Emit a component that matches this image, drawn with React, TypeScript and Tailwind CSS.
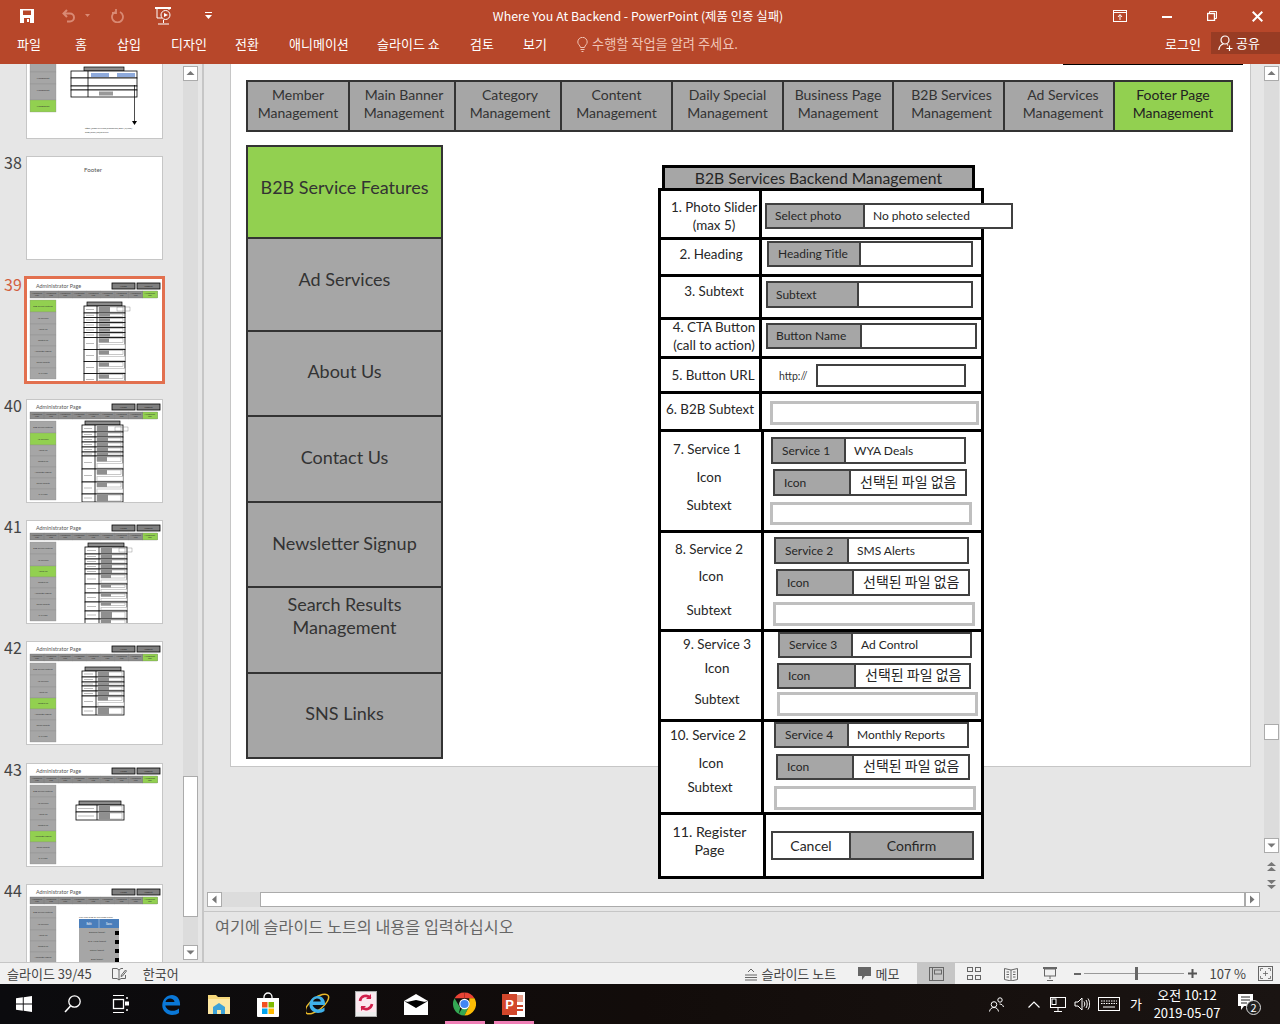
import React from "react";

const GRAY = "#a6a6a6";
const SIDE = ["B2B Service Features", "Ad Services", "About Us", "Contact Us", "Newsletter Signup", "Search Results Management", "SNS Links"];

// --- thumbnails: tiny slide drawings ---
function MiniForm({ x, w, div, y, rows }: { x: number; w: number; div: number; y: number; rows: number[] }) {
  let cy = y + 4;
  return (
    <g>
      <rect x={x + 3} y={y} width={w - 6} height={4} fill="#8c8c8c" stroke="#000" strokeWidth={0.7} />
      {rows.map((h, i) => {
        const top = cy;
        cy += h;
        return (
          <g key={i}>
            <rect x={x} y={top} width={w} height={h} fill="#fff" stroke="#000" strokeWidth={0.8} />
            <line x1={div} x2={div} y1={top} y2={top + h} stroke="#000" strokeWidth={0.8} />
            <rect x={x + 2} y={top + h / 2 - 0.4} width={div - x - 5} height={0.8} fill="#aaa" />
            {h < 9 ? (
              <g>
                <rect x={div + 2} y={top + 1} width={x + w - div - 4} height={h - 2} fill="#fff" stroke="#777" strokeWidth={0.4} />
                <rect x={div + 2} y={top + 1} width={11} height={h - 2} fill="#8f8f8f" />
              </g>
            ) : (
              <g>
                <rect x={div + 2} y={top + 1} width={x + w - div - 4} height={h / 2 - 2} fill="#fff" stroke="#777" strokeWidth={0.4} />
                <rect x={div + 2} y={top + 1} width={10} height={h / 2 - 2} fill="#8f8f8f" />
                <rect x={div + 2} y={top + h / 2 + 1} width={x + w - div - 2} height={h / 2 - 2} fill="#fff" stroke="#bbb" strokeWidth={0.7} />
              </g>
            )}
          </g>
        );
      })}
    </g>
  );
}

function SideCol({ active }: { active: number }) {
  const tops = [21, 33, 45, 56, 67, 78, 89, 100];
  return (
    <g>
      <text x={9} y={9} fontSize={5.4} fill="#555">Administrator Page</text>
      <rect x={85} y={4} width={23} height={6} fill="#7f7f7f" stroke="#000" strokeWidth={0.8} />
      <rect x={110} y={4} width={23} height={6} fill="#7f7f7f" stroke="#000" strokeWidth={0.8} />
      <text x={96.5} y={8.2} fontSize={2.6} textAnchor="middle" fill="#222">Home</text>
      <text x={121.5} y={8.2} fontSize={2.6} textAnchor="middle" fill="#222">Logout</text>
      {[0, 1, 2, 3, 4, 5, 6, 7, 8].map((i) => (
        <g key={i}>
          <rect x={3 + i * 14.1} y={12} width={i === 8 ? 15 : 14.1} height={7} fill={i === 8 ? "#92d050" : "#8c8c8c"} stroke="#666" strokeWidth={0.3} />
          <text x={10 + i * 14.1} y={15} fontSize={1.8} textAnchor="middle" fill="#333">Management</text>
          <text x={10 + i * 14.1} y={17.4} fontSize={1.8} textAnchor="middle" fill="#333">Page</text>
        </g>
      ))}
      {SIDE.map((s, i) => (
        <g key={s}>
          <rect x={3} y={tops[i]} width={26} height={tops[i + 1] - tops[i]} fill={i === active ? "#92d050" : GRAY} stroke="#888" strokeWidth={0.3} />
          {!(active === 5 && i >= 5) && (
            <text x={16} y={(tops[i] + tops[i + 1]) / 2 + 0.8} fontSize={2.1} textAnchor="middle" fill="#333">{s.length > 20 ? "Search Results" : s}</text>
          )}
        </g>
      ))}
    </g>
  );
}

function Thumb37() {
  return (
    <g>
      {[0, 12, 24, 36, 48, 64].map((t, i) => (
        <g key={t}>
          <rect x={3} y={t} width={26} height={i === 4 ? 16 : 12} fill={i === 5 ? "#92d050" : GRAY} stroke="#888" strokeWidth={0.3} />
          {t >= 36 && <text x={16} y={t + 7} fontSize={2.2} textAnchor="middle" fill="#333">Management</text>}
        </g>
      ))}
      <rect x={57} y={31} width={40} height={4} fill="#8c8c8c" stroke="#000" strokeWidth={0.7} />
      {[[35, 7], [42, 8], [50, 4], [54, 7]].map(([t, h]) => (
        <g key={t}>
          <rect x={44} y={t} width={66} height={h} fill="#fff" stroke="#000" strokeWidth={0.8} />
          <line x1={61} x2={61} y1={t} y2={t + h} stroke="#000" strokeWidth={0.8} />
        </g>
      ))}
      <rect x={64} y={37} width={18} height={4} fill="#8eaadb" />
      <rect x={90} y={37} width={18} height={4} fill="#8eaadb" />
      <rect x={72} y={55.5} width={14} height={4} fill="#999" />
      <line x1={107.5} x2={107.5} y1={49} y2={86} stroke="#000" strokeWidth={0.7} />
      <polygon points="105,85 110,85 107.5,89" fill="#000" />
      <text x={58} y={93} fontSize={2.3} fill="#444">https://page.wya.com/dashboard/8391/#/add/</text>
      <text x={58} y={97} fontSize={2.3} fill="#444">page/main/list/preview</text>
    </g>
  );
}

function Thumb44() {
  return (
    <g>
      <text x={52} y={33} fontSize={2.4} fill="#444">Pick and drag to rearrange order</text>
      <rect x={52} y={34} width={40} height={9} fill="#4a7ebb" />
      <line x1={72} x2={72} y1={34} y2={43} stroke="#fff" strokeWidth={0.4} />
      <text x={62} y={40} fontSize={3} fill="#fff" textAnchor="middle">Edit</text>
      <text x={82} y={40} fontSize={3} fill="#fff" textAnchor="middle">Save</text>
      {[43, 52, 61, 70].map((t, i) => (
        <g key={t}>
          <rect x={52} y={t} width={40} height={9} fill={GRAY} />
          <text x={70} y={t + 5} fontSize={2.2} fill="#333" textAnchor="middle">{["Business (Result)", "SMS Alerts (Result)", "Others (Result)", "Blog (Result)"][i]}</text>
          <rect x={88} y={t + 3} width={4} height={4} fill="#000" />
        </g>
      ))}
    </g>
  );
}

function Thumb({ n, active, children, selected, top }: { n: number; active?: number; children?: React.ReactNode; selected?: boolean; top?: boolean }) {
  return (
    <div className="flex h-[102px] shrink-0">
      <div className={`w-[27px] pl-[4px] -mt-[2px] text-[16px] leading-[14px] ${selected ? "text-[#d2603f]" : "text-[#444]"}`}>{top ? "" : n}</div>
      <div className={`relative w-[135px] h-[102px] shrink-0 bg-white outline outline-1 outline-[#c6c6c6] ${selected ? "outline-3 outline-[#e2704f] -outline-offset-0" : ""}`}>
        <svg viewBox="0 0 135 102" className="w-[135px] h-[102px] block overflow-hidden font-['Lato',sans-serif]">
          {active !== undefined && <SideCol active={active} />}
          {children}
        </svg>
      </div>
    </div>
  );
}

function ScrollBtn({ dir, className = "" }: { dir: "up" | "down" | "left" | "right"; className?: string }) {
  const pts = { up: "3.5,9 11.5,9 7.5,5", down: "3.5,5.5 11.5,5.5 7.5,9.5", left: "9.5,3.5 9.5,11.5 5,7.5", right: "5,3.5 5,11.5 9.5,7.5" }[dir];
  return (
    <div className={`w-[15px] h-[15px] bg-white border border-[#ababab] flex items-center justify-center shrink-0 ${className}`}>
      <svg width="13" height="13" viewBox="1 1 13 13"><polygon points={pts} fill="#777" /></svg>
    </div>
  );
}

function ThumbPane() {
  return (
    <div className="relative w-[204px] shrink-0 bg-[#e6e6e6] border-r-2 border-[#c6c6c6] flex overflow-hidden">
      <div className="w-[183px] shrink-0 flex flex-col gap-[19.25px] -mt-[28px]">
        <Thumb n={37} top><Thumb37 /></Thumb>
        <Thumb n={38}><text x={66} y={15} fontSize={6.2} textAnchor="middle" fill="#555">Footer</text></Thumb>
        <Thumb n={39} active={0} selected><MiniForm x={57} w={41} div={70} y={23} rows={[7, 4.5, 5, 5, 5, 5, 12, 12, 12, 12]} />
          <rect x={90} y={28} width={13} height={4} fill="none" stroke="#555" strokeWidth={0.3} /></Thumb>
        <Thumb n={40} active={1}><MiniForm x={55} w={41} div={68} y={21} rows={[7, 5, 5, 5, 5, 4, 13, 13, 12, 8]} />
          <rect x={88} y={27} width={13} height={4} fill="none" stroke="#555" strokeWidth={0.3} /></Thumb>
        <Thumb n={41} active={2}><MiniForm x={58} w={42} div={72} y={22} rows={[7, 5, 5, 5, 5, 10, 9, 9, 9, 8, 12]} />
          <rect x={92} y={27} width={13} height={4} fill="none" stroke="#555" strokeWidth={0.3} /></Thumb>
        <Thumb n={42} active={3}><MiniForm x={55} w={42} div={69} y={25} rows={[6, 5, 4, 5, 5, 11, 8]} /></Thumb>
        <Thumb n={43} active={4}><MiniForm x={49} w={48} div={70} y={37} rows={[7, 8]} /></Thumb>
        <Thumb n={44} active={5}><Thumb44 /></Thumb>
      </div>
      <div className="w-[15px] shrink-0 bg-[#dcdcdc] mt-[2px] mb-[2px] flex flex-col">
        <ScrollBtn dir="up" />
        <div className="mt-[695px] h-[141px] bg-white border border-[#ababab]" />
        <ScrollBtn dir="down" className="mt-auto" />
      </div>
    </div>
  );
}

// --- top bar ---
function QuickAccess() {
  return (
    <div className="flex items-center h-[32px] pl-[20px]">
      <svg width="14" height="14" viewBox="0 0 14 14"><path fill="#fff" fillRule="evenodd" d="M0 0h14v14H0zM3 1.5V6h8V1.5zM4 9v5h6V9zm3 1h2v3H7z" /></svg>
      <svg className="ml-[28px]" width="14" height="14" viewBox="0 0 14 14" fill="none" stroke="#d98a74" strokeWidth="2"><path d="M5 1 1.5 4.5 5 8" /><path d="M2 4.5h6a4 4 0 0 1 0 8H5" /></svg>
      <svg className="ml-[9px]" width="5" height="4" viewBox="0 0 5 4"><path d="M0 0h5L2.5 3z" fill="#d98a74" /></svg>
      <svg className="ml-[21px]" width="14" height="14" viewBox="0 0 14 14" fill="none" stroke="#d98a74" strokeWidth="1.8"><path d="M4 3a5.5 5.5 0 1 0 5 0" /><path d="M4 0v4H0" transform="translate(1 0)" /></svg>
      <svg className="ml-[30px]" width="17" height="18" viewBox="0 0 17 18" fill="none" stroke="#fff" strokeWidth="1"><path d="M0 1h16" strokeWidth="2" /><path d="M2 2v9h5M14 2v1" /><circle cx="10.5" cy="8" r="4.5" /><polygon points="9,6 13,8 9,10" fill="#fff" stroke="none" /><path d="M8.5 13v3M3 17h11" /></svg>
      <svg className="ml-[33px]" width="7" height="8" viewBox="0 0 7 8" fill="#fff"><path d="M0 0h7v1H0zM0 3h7L3.5 7z" /></svg>
    </div>
  );
}

function WindowButtons() {
  return (
    <div className="flex items-center justify-end h-[32px] pr-[17px]">
      <svg width="14" height="12" viewBox="0 0 14 12" fill="none" stroke="#fff"><rect x=".5" y=".5" width="13" height="11" /><path d="M1 2.5h12" /><path d="M7 10V5M5 7l2-2.5L9 7" /></svg>
      <div className="w-[10px] h-[2px] bg-white ml-[35px] mt-[2px]" />
      <svg className="ml-[35px]" width="10" height="10" viewBox="0 0 10 10" fill="none" stroke="#fff"><rect x=".5" y="2.5" width="7" height="7" strokeWidth="1.4" /><path d="M2.5 2V.5h7v7H8" /></svg>
      <svg className="ml-[35px]" width="11" height="11" viewBox="0 0 11 11" stroke="#fff" strokeWidth="2"><path d="M.7.7l9.6 9.6M10.3.7.7 10.3" /></svg>
    </div>
  );
}

function TopBar() {
  return (
    <header className="h-[64px] shrink-0 bg-[#b7472a] text-white">
      <div className="grid grid-cols-[1fr_auto_1fr]">
        <QuickAccess />
        <div className="text-[12.4px] leading-[32px] pr-[4px]">Where You At Backend - PowerPoint (제품 인증 실패)</div>
        <WindowButtons />
      </div>
      <div className="flex items-center h-[24px]">
        <div className="pl-[17px] grid grid-cols-[58px_42px_54px_64px_54px_88px_93px_53px_54px] text-[13px] w-[577px]">
          {["파일", "홈", "삽입", "디자인", "전환", "애니메이션", "슬라이드 쇼", "검토", "보기"].map((t) => <span key={t} className="whitespace-nowrap">{t}</span>)}
        </div>
        <svg width="11" height="15" viewBox="0 0 11 15" fill="none" stroke="#f0c4b6"><path d="M3.5 10.5C3 8 .8 7.5.8 5a4.7 4.7 0 0 1 9.4 0c0 2.500-2.200 3-2.700 5.500z" /><path d="M3.500 12.500h4M4.500 14.500h2" /></svg>
        <span className="ml-[4px] text-[13.2px] text-[#f0c4b6]">수행할 작업을 알려 주세요.</span>
        <span className="ml-auto text-[13px]">로그인</span>
        <div className="ml-[10px] w-[69px] h-[22px] mt-[-2px] bg-[#983c24] flex items-center pl-[7px] text-[13px]">
          <svg width="15" height="16" viewBox="0 0 15 16" fill="none" stroke="#fff" strokeWidth="1.200"><circle cx="7" cy="5" r="4" /><path d="M.8 15c.4-3.500 2.500-5.500 4.500-6M9 9.500l1 .7" /><path d="M8.500 13.500h6M11.500 10.500v6" /></svg>
          <span className="ml-[3px]">공유</span>
        </div>
      </div>
    </header>
  );
}

// --- the slide ---
const NAV = [
  { t: "Member", pad: "" },
  { t: "Main Banner", pad: "pl-[4px]" },
  { t: "Category", pad: "pl-[4px]" },
  { t: "Content", pad: "" },
  { t: "Daily Special", pad: "" },
  { t: "Business Page", pad: "" },
  { t: "B2B Services", pad: "pl-[6px]" },
  { t: "Ad Services", pad: "pl-[8px]" },
  { t: "Footer Page", pad: "bg-[#92d050] text-[#222]" },
];

function SlideNav() {
  return (
    <div className="ml-[15px] mt-[15px] w-[987px] h-[52px] border-2 border-[#333] grid grid-cols-[102px_106px_106px_111px_111px_110px_111px_110px_116px] bg-[#a6a6a6] text-[14px] leading-[18px] text-[#333]">
      {NAV.map(({ t, pad }) => (
        <div key={t} className={`flex flex-col items-center justify-center pb-[4px] border-r-2 border-[#333] last:border-r-0 ${pad}`}>
          <span>{t}</span><span>Management</span>
        </div>
      ))}
    </div>
  );
}

function SlideSide() {
  return (
    <div className="w-[197px] h-[614px] shrink-0 border-2 border-[#333] grid grid-rows-[92px_93px_85px_86px_85px_86px_83px] text-[18px] leading-[23px] text-[#333] text-center bg-[#a6a6a6]">
      <div className="bg-[#92d050] flex items-center justify-center pb-[9px] border-b-2 border-[#333]">B2B Service Features</div>
      <div className="flex items-center justify-center pb-[10px] border-b-2 border-[#333]">Ad Services</div>
      <div className="flex items-center justify-center pb-[4px] border-b-2 border-[#333]">About Us</div>
      <div className="flex items-center justify-center pb-[4px] border-b-2 border-[#333]">Contact Us</div>
      <div className="flex items-center justify-center pb-[2px] border-b-2 border-[#333]">Newsletter Signup</div>
      <div className="flex items-center justify-center pb-[28px] border-b-2 border-[#333]">Search Results<br />Management</div>
      <div className="flex items-center justify-center pb-[4px]">SNS Links</div>
    </div>
  );
}

function Field({ label, value, className, labelW, pad = "pl-[9px]", ko }: { label: string; value?: string; className: string; labelW: string; pad?: string; ko?: boolean }) {
  return (
    <div className={`relative z-10 flex border-2 border-[#404040] bg-white text-[12px] text-[#262626] ${className}`}>
      <div className={`bg-[#a6a6a6] border-r-2 border-[#404040] flex items-center shrink-0 ${pad} ${labelW}`}>{label}</div>
      {value && <div className={`flex items-center ${ko ? "pl-[9px] pb-[4px] text-[14px] font-['Noto_Sans_CJK_KR',sans-serif]" : "pl-[8px]"}`}>{value}</div>}
    </div>
  );
}

function Blank({ className }: { className: string }) {
  return <div className={`border-[3px] border-[#bfbfbf] bg-white ${className}`} />;
}

const FILE_NONE = "선택된 파일 없음";

function Row({ h, labelW, children, label, last }: { h: string; labelW: string; label: React.ReactNode; children: React.ReactNode; last?: boolean }) {
  return (
    <div className={`flex ${h} ${last ? "" : "border-b-[3px] border-black"}`}>
      <div className={`shrink-0 border-r-[3px] border-black text-center ${labelW}`}>{label}</div>
      <div className="flex-1 min-w-0">{children}</div>
    </div>
  );
}

function BackendForm() {
  return (
    <div className="ml-[215px] mt-[20px] w-[326px] shrink-0 text-[13.4px] leading-[18px] text-[#262626]">
      <div className="ml-[4px] w-[313px] h-[23px] border-[3px] border-b-0 border-black bg-[#a6a6a6] text-center text-[15.7px] leading-[20px]">B2B Services Backend Management</div>
      <div className="border-[3px] border-black bg-white">
        <Row h="h-[49px]" labelW="w-[101px]" label={<div className="pl-[8px] pt-[7px]">1. Photo Slider<br />(max 5)</div>}>
          <Field label="Select photo" value="No photo selected" pad="pl-[8px]" className="ml-[3px] mt-[12px] w-[248px] h-[26px]" labelW="w-[98px]" />
        </Row>
        <Row h="h-[37px]" labelW="w-[101px]" label={<div className="pt-[5px] pl-[2px]">2. Heading</div>}>
          <Field label="Heading Title" className="ml-[5px] mt-[1px] w-[206px] h-[26px]" labelW="w-[92px]" />
        </Row>
        <Row h="h-[43px]" labelW="w-[101px]" label={<div className="pt-[5px] pl-[8px]">3. Subtext</div>}>
          <Field label="Subtext" pad="pl-[8px]" className="ml-[4px] mt-[4px] w-[207px] h-[27px]" labelW="w-[91px]" />
        </Row>
        <Row h="h-[39px]" labelW="w-[101px]" label={<div className="-mt-[2px] pl-[8px] whitespace-nowrap">4. CTA Button<br />(call to action)</div>}>
          <Field label="Button Name" pad="pl-[8px]" className="ml-[4px] mt-[3px] w-[211px] h-[26px]" labelW="w-[94px]" />
        </Row>
        <Row h="h-[35px]" labelW="w-[101px]" label={<div className="pt-[7px] pl-[6px]">5. Button URL</div>}>
          <div className="flex items-center ml-[17px] mt-[5px]">
            <span className="w-[37px] text-[10.5px] text-[#333]">http://</span>
            <div className="w-[150px] h-[23px] border-2 border-[#404040] bg-white" />
          </div>
        </Row>
        <Row h="h-[38px]" labelW="w-[101px]" label={<div className="pt-[6px]">6. B2B Subtext</div>}>
          <Blank className="ml-[8px] mt-[7px] w-[209px] h-[24px]" />
        </Row>
        <Row h="h-[101px]" labelW="w-[103px]" label={
          <div className="pr-[4px]">
            <p className="mt-[8px] pr-[4px]">7. Service 1</p>
            <p className="mt-[10px]">Icon</p>
            <p className="mt-[10px]">Subtext</p>
          </div>
        }>
          <Field label="Service 1" value="WYA Deals" className="ml-[7px] mt-[5px] w-[195px] h-[27px]" labelW="w-[73px]" />
          <Field label="Icon" value={FILE_NONE} ko className="ml-[9px] mt-[5px] w-[194px] h-[27px]" labelW="w-[76px]" />
          <Blank className="ml-[6px] mt-[6px] w-[202px] h-[23px]" />
        </Row>
        <Row h="h-[99px]" labelW="w-[103px]" label={
          <div className="pr-[4px]">
            <p className="mt-[7px]">8. Service 2</p>
            <p className="mt-[9px] pl-[4px]">Icon</p>
            <p className="mt-[16px]">Subtext</p>
          </div>
        }>
          <Field label="Service 2" value="SMS Alerts" className="ml-[10px] mt-[4px] w-[195px] h-[27px]" labelW="w-[73px]" />
          <Field label="Icon" value={FILE_NONE} ko className="ml-[12px] mt-[5px] w-[194px] h-[27px]" labelW="w-[76px]" />
          <Blank className="ml-[9px] mt-[6px] w-[202px] h-[24px]" />
        </Row>
        <Row h="h-[90px]" labelW="w-[103px]" label={
          <div className="pl-[12px]">
            <p className="mt-[3px]">9. Service 3</p>
            <p className="mt-[6px]">Icon</p>
            <p className="mt-[13px]">Subtext</p>
          </div>
        }>
          <Field label="Service 3" value="Ad Control" className="ml-[14px] w-[194px] h-[26px]" labelW="w-[73px]" />
          <Field label="Icon" value={FILE_NONE} ko className="ml-[13px] mt-[5px] w-[194px] h-[26px]" labelW="w-[77px]" />
          <Blank className="ml-[13px] mt-[3px] w-[201px] h-[24px]" />
        </Row>
        <Row h="h-[93px]" labelW="w-[103px]" label={
          <div>
            <p className="mt-[4px] pr-[6px]">10. Service 2</p>
            <p className="mt-[10px]">Icon</p>
            <p className="mt-[6px] pr-[2px]">Subtext</p>
          </div>
        }>
          <Field label="Service 4" value="Monthly Reports" className="ml-[10px] w-[195px] h-[26px]" labelW="w-[73px]" />
          <Field label="Icon" value={FILE_NONE} ko className="ml-[12px] mt-[6px] w-[194px] h-[26px]" labelW="w-[76px]" />
          <Blank className="ml-[10px] mt-[6px] w-[202px] h-[24px]" />
        </Row>
        <Row h="h-[61px]" labelW="w-[105px]" last label={<div className="pt-[8px] pr-[5px] text-[14.2px]">11. Register<br />Page</div>}>
          <div className="ml-[5px] mt-[16px] w-[203px] h-[29px] flex border-2 border-[#404040] text-[14px]">
            <div className="w-[78px] flex items-center justify-center border-r-2 border-[#404040]">Cancel</div>
            <div className="flex-1 flex items-center justify-center bg-[#a6a6a6]">Confirm</div>
          </div>
        </Row>
      </div>
    </div>
  );
}

function Slide() {
  return (
    <div className="ml-[26px] w-[1021px] h-[703px] shrink-0 bg-white border border-t-0 border-[#c6c6c6] font-['Lato','Noto_Sans_CJK_KR',sans-serif]">
      <div className="ml-[832px] w-[180px] h-[1px] bg-black" />
      <SlideNav />
      <div className="flex ml-[15px] mt-[13px]">
        <SlideSide />
        <BackendForm />
      </div>
    </div>
  );
}

function Editor() {
  return (
    <div className="flex-1 min-w-0 flex flex-col">
      <div className="flex-1 min-h-0 flex relative">
        <div className="flex-1 min-w-0"><Slide /></div>
        <div className="w-[17px] shrink-0 flex flex-col pl-[1px] pr-[1px] pt-[2px]">
          <div className="h-[789px] bg-[#dcdcdc] flex flex-col">
            <ScrollBtn dir="up" />
            <div className="mt-[643px] h-[16px] bg-white border border-[#ababab]" />
            <ScrollBtn dir="down" className="mt-auto" />
          </div>
          <div className="mt-[6px] h-[15px] flex items-center justify-center">
            <svg width="11" height="11" viewBox="0 0 11 11" fill="#777"><path d="M1 5h9L5.500 1zM1 10h9L5.500 6z" /></svg>
          </div>
          <div className="mt-[3px] h-[15px] flex items-center justify-center">
            <svg width="11" height="11" viewBox="0 0 11 11" fill="#777"><path d="M1 1h9L5.500 5zM1 6h9L5.500 10z" /></svg>
          </div>
        </div>
      </div>
      <div className="h-[15px] shrink-0 flex ml-[3px] mr-[20px] mb-[4px]">
        <ScrollBtn dir="left" />
        <div className="w-[38px] bg-[#dcdcdc]" />
        <div className="flex-1 bg-white border border-[#ababab]" />
        <ScrollBtn dir="right" />
      </div>
      <div className="h-[51px] shrink-0 border-t border-[#c6c6c6] pl-[11px] pt-[3px] text-[16.25px] leading-[22px] text-[#666]">여기에 슬라이드 노트의 내용을 입력하십시오</div>
    </div>
  );
}

// --- status bar ---
function StatusBar() {
  return (
    <footer className="h-[22px] shrink-0 bg-[#f1f1f1] border-t border-[#c6c6c6] flex items-center text-[13px] text-[#444]">
      <span className="ml-[7px]">슬라이드 39/45</span>
      <svg className="ml-[20px]" width="15" height="14" viewBox="0 0 15 14" fill="none" stroke="#666"><path d="M.5 1.500H5l2 1.500v10l-2-1.500H.5zM7 3l2-1.500h2M7 13l2-1.500h4.500V8" /><path d="M9.500 8l4-5 1 1-4 5-1.500.5z" /></svg>
      <span className="ml-[16px]">한국어</span>
      <svg className="ml-auto" width="12" height="14" viewBox="0 0 12 14" fill="none" stroke="#666"><path d="M0 8h12M0 10.500h12M0 13h12" /><path d="M3 5l3-3 3 3" /></svg>
      <span className="ml-[4px] w-[84px] whitespace-nowrap">슬라이드 노트</span>
      <svg className="ml-[13px]" width="13" height="13" viewBox="0 0 13 13" fill="#666"><path d="M0 0h13v9H7l-3 4V9H0z" /></svg>
      <span className="ml-[4px] w-[24px] whitespace-nowrap">메모</span>
      <div className="ml-[18px] w-[38px] h-[21px] bg-[#c6c6c6] flex items-center justify-center">
        <svg width="15" height="14" viewBox="0 0 15 14" fill="none" stroke="#666"><rect x=".5" y=".5" width="14" height="13" /><path d="M3.500 1v12" /><rect x="5.500" y="3" width="7" height="4" /></svg>
      </div>
      <svg className="ml-[12px]" width="14" height="13" viewBox="0 0 14 13" fill="none" stroke="#666"><rect x=".5" y=".5" width="5" height="4" /><rect x="8.500" y=".5" width="5" height="4" /><rect x=".5" y="8.500" width="5" height="4" /><rect x="8.500" y="8.500" width="5" height="4" /></svg>
      <svg className="ml-[23px]" width="14" height="14" viewBox="0 0 14 14" fill="none" stroke="#666"><path d="M.5 1.500 7 3l6.500-1.500v11L7 14 .5 12.500zM7 3v11M2.500 5h2.500M2.500 7.500h2.500M2.500 10h2.500M9 5h2.500M9 7.500h2.500M9 10h2.500" /></svg>
      <svg className="ml-[25px]" width="14" height="14" viewBox="0 0 14 14" fill="none" stroke="#666"><path d="M0 1h14" strokeWidth="2" /><rect x="1.500" y="2" width="11" height="7" /><path d="M7 9v3M4 13.500h6" /></svg>
      <div className="ml-[17px] w-[7px] h-[2px] bg-[#666]" />
      <div className="relative ml-[3px] w-[100px] h-[1px] bg-[#999]">
        <div className="absolute left-[51px] top-[-6px] w-[3px] h-[13px] bg-[#666]" />
      </div>
      <svg className="ml-[4px]" width="9" height="9" viewBox="0 0 9 9" fill="#555"><path d="M3.500 0h2v3.500H9v2H5.500V9h-2V5.500H0v-2h3.500z" /></svg>
      <span className="ml-[12px]">107 %</span>
      <svg className="ml-[12px] mr-[7px]" width="15" height="15" viewBox="0 0 15 15" fill="none" stroke="#666"><rect x=".5" y=".5" width="14" height="14" /><path d="M2.500 5V2.500H5M10 2.500h2.500V5M12.500 10v2.500H10M5 12.500H2.500V10M7.500 5V10M5 7.500h5" strokeWidth=".8" /></svg>
    </footer>
  );
}

// --- taskbar ---
function AppIcons() {
  return (
    <div className="flex items-center h-[40px]">
      <svg className="ml-[16px]" width="16" height="16" viewBox="0 0 16 16" fill="#fff"><path d="M0 2.300 6.800 1.300v6.200H0zM7.700 1.200 16 0v7.500H7.700zM0 8.400h6.800v6.300L0 13.700zM7.700 8.400H16V16l-8.300-1.200z" /></svg>
      <svg className="ml-[32px]" width="17" height="18" viewBox="0 0 17 18" fill="none" stroke="#fff" strokeWidth="1.300"><circle cx="10.500" cy="6.500" r="5.700" /><path d="M6.500 11 1 17" strokeWidth="1.600" /></svg>
      <svg className="ml-[31px]" width="17" height="18" viewBox="0 0 17 18" fill="none" stroke="#fff"><path d="M1 .5h11M1 17.500h11" /><rect x="1.500" y="4.500" width="10" height="9" strokeWidth="1.300" /><path d="M15 2v2M15 14v2" strokeWidth="1.500" /><rect x="13.500" y="7" width="3" height="3" fill="#fff" /></svg>
      <svg className="ml-[33px]" width="20" height="23" viewBox="0 0 20 23"><path d="M3.300 12.500h14.700c.6-6-3-10.500-8-10.500C5 2 .8 6 .3 11.500-.2 18 5 22 10 22c3 0 5.500-1 7-2v-4.500c-2 1.500-4 2.300-6.500 2.300-3.500 0-6.500-2-7.200-5.300zM3.500 9c.5-2 2-3.500 4.500-3.500 2.300 0 4.500 1.200 4.500 3.500z" fill="#0a78d7" fillRule="evenodd" /></svg>
      <svg className="ml-[26px]" width="22" height="22" viewBox="0 0 22 22"><path d="M0 2h8l2 2h12v16H0z" fill="#f5d77a" /><rect y="6" width="22" height="15" fill="#fde7a3" /><path d="M5 21v-7l6-4 6 4v7h-4v-4H9v4z" fill="#3da2d8" /></svg>
      <svg className="ml-[27px]" width="22" height="25" viewBox="0 0 22 25"><path d="M7 8V5a4 4 0 0 1 8 0v3" fill="none" stroke="#fff" strokeWidth="1.300" /><path d="M0 6h22v18a1 1 0 0 1-1 1H1a1 1 0 0 1-1-1z" fill="#fff" /><rect x="5" y="10" width="5.500" height="5.500" fill="#f25022" /><rect x="11.500" y="10" width="5.500" height="5.500" fill="#7fba00" /><rect x="5" y="16.500" width="5.500" height="5.500" fill="#00a4ef" /><rect x="11.500" y="16.500" width="5.500" height="5.500" fill="#ffb900" /></svg>
      <svg className="ml-[27px]" width="24" height="26" viewBox="0 0 24 26"><ellipse cx="11" cy="13" rx="14" ry="6" transform="rotate(-38 11 13)" fill="none" stroke="#e9b929" strokeWidth="1.500" /><path d="M4.500 14h14.500c.6-5-2.500-9-7-9-4.500 0-8 3.500-8.500 8-.5 5.500 4 9 8.500 9 2.800 0 5-.8 6.500-2v-3.500c-1.700 1.200-3.500 2-5.500 2-3 0-5.500-1.800-6.500-4.500zM7 10.500c.5-1.800 2-3 4-3s3.800 1 3.800 3z" fill="#3fb0e8" fillRule="evenodd" /></svg>
      <div className="ml-[25px] w-[22px] h-[26px] bg-[#ededed] border border-[#aaa] flex flex-col items-center pt-[1px]">
        <svg width="20" height="19" viewBox="0 0 20 19"><rect width="20" height="19" fill="#fbe9ef" /><path d="M4 8a6 6 0 0 1 10.500-3M16 11a6 6 0 0 1-10.500 3" fill="none" stroke="#d01f4a" strokeWidth="2.600" /><path d="M15 1v5h-5zM5 18v-5h5z" fill="#d01f4a" /></svg>
      </div>
      <svg className="ml-[27px]" width="24" height="21" viewBox="0 0 24 21"><path d="M0 7 12 0l12 7v14H0z" fill="#fff" /><path d="M0 7l12 7 12-7-12 3z" fill="#000" /><path d="M3 8l9 4 9-4-9-2z" fill="#000" /></svg>
      <svg className="ml-[25px]" width="23" height="24" viewBox="-12 -12 24 24"><path d="M0-12A12 12 0 0 1 10.400-6H0z" fill="#ea4335" /><path d="M-10.400-6A12 12 0 0 1 0-12V-6z" fill="#ea4335" /><path d="M-10.400-6 -4.500 4-6 10.400A12 12 0 0 1-10.400-6z" fill="#34a853" /><path d="M-6 10.400-0.500 1 4 4 0 12a12 12 0 0 1-6-1.600z" fill="#34a853" /><path d="M10.400-6A12 12 0 0 1 0 12L5 2V-6z" fill="#fbbc05" /><circle r="5.500" fill="#fff" /><circle r="4.300" fill="#4285f4" /></svg>
      <div className="ml-[26px] relative w-[23px] h-[25px]">
        <div className="absolute left-[7px] top-0 w-[16px] h-[25px] bg-[#fff] " />
        <div className="absolute left-[9px] top-[3px] w-[12px] h-[7px] bg-[#e8a08c]" />
        <div className="absolute left-[12px] top-[13px] w-[9px] h-[2px] bg-[#c8442a]" />
        <div className="absolute left-[12px] top-[17px] w-[9px] h-[2px] bg-[#c8442a]" />
        <div className="absolute left-0 top-[2px] w-[15px] h-[21px] bg-[#d2472b] flex items-center justify-center text-white text-[13px] leading-none font-bold font-['Liberation_Sans',sans-serif]">P</div>
      </div>
    </div>
  );
}

function Tray() {
  return (
    <div className="flex items-center h-[40px] text-white">
      <svg width="15" height="15" viewBox="0 0 15 15" fill="none" stroke="#fff"><circle cx="5" cy="7.500" r="2.800" /><path d="M.5 14.500c.5-2.500 2-4 4.500-4s4 1.500 4.500 4" /><circle cx="11" cy="3" r="2.200" /><path d="M10.500 7c2 0 3.500 1 4 3" /></svg>
      <svg className="ml-[24px]" width="12" height="7" viewBox="0 0 12 7" fill="none" stroke="#fff" strokeWidth="1.200"><path d="M.5 6.500 6 1l5.500 5.500" /></svg>
      <svg className="ml-[10px]" width="16" height="15" viewBox="0 0 16 15" fill="none" stroke="#fff"><rect x=".5" y=".5" width="15" height="10" /><rect x="2" y="2" width="4" height="5.500" fill="#000" /><path d="M8 10.500V14M4 14.500h8" /></svg>
      <svg className="ml-[8px]" width="16" height="14" viewBox="0 0 16 14" fill="none" stroke="#fff"><path d="M1 5h3l4-4v12L4 9H1z" /><path d="M10 4.500c1 1.500 1 3.500 0 5M12 3c1.600 2.500 1.600 5.500 0 8M14 1.500c2.200 3.500 2.200 7.500 0 11" /></svg>
      <svg className="ml-[8px]" width="22" height="14" viewBox="0 0 22 14" fill="none" stroke="#fff"><rect x=".5" y=".5" width="21" height="13" /><path d="M3 4h16M3 6.500h16" strokeDasharray="1.500 1" /><path d="M5 10h12" /></svg>
      <span className="ml-[10px] text-[13px] w-[14px]">가</span>
      <div className="ml-[5px] w-[76px] text-center text-[13px] leading-[18px]">
        <div>오전 10:12</div>
        <div>2019-05-07</div>
      </div>
      <div className="relative ml-[13px] mr-[20px] w-[22px] h-[28px]">
        <svg className="absolute left-0 top-[4px]" width="15" height="16" viewBox="0 0 15 16"><path d="M0 0h15v12H6l-3 4v-4H0z" fill="#fff" /><path d="M3 3h9M3 6h9M3 9h6" stroke="#222" /></svg>
        <div className="absolute left-[8px] top-[10px] w-[15px] h-[15px] rounded-full border border-[#ddd] bg-[#222] text-[11px] leading-[13px] text-center">2</div>
      </div>
    </div>
  );
}

function Taskbar() {
  return (
    <div className="relative h-[40px] shrink-0 bg-gradient-to-r from-[#0b0b0e] via-[#120c0a] to-[#1a1412] flex justify-between overflow-hidden">
      <AppIcons />
      <Tray />
      <div className="absolute left-[445px] bottom-0 w-[40px] h-[3px] bg-[#ef7fb6]" />
      <div className="absolute left-[494px] bottom-0 w-[40px] h-[3px] bg-[#ef7fb6]" />
    </div>
  );
}

export default function App() {
  return (
    <div className="w-[1280px] h-[1024px] flex flex-col overflow-hidden bg-[#e6e6e6] font-['Noto_Sans_CJK_KR','Noto_Sans',sans-serif]">
      <TopBar />
      <div className="flex-1 min-h-0 flex">
        <ThumbPane />
        <Editor />
      </div>
      <StatusBar />
      <Taskbar />
    </div>
  );
}
